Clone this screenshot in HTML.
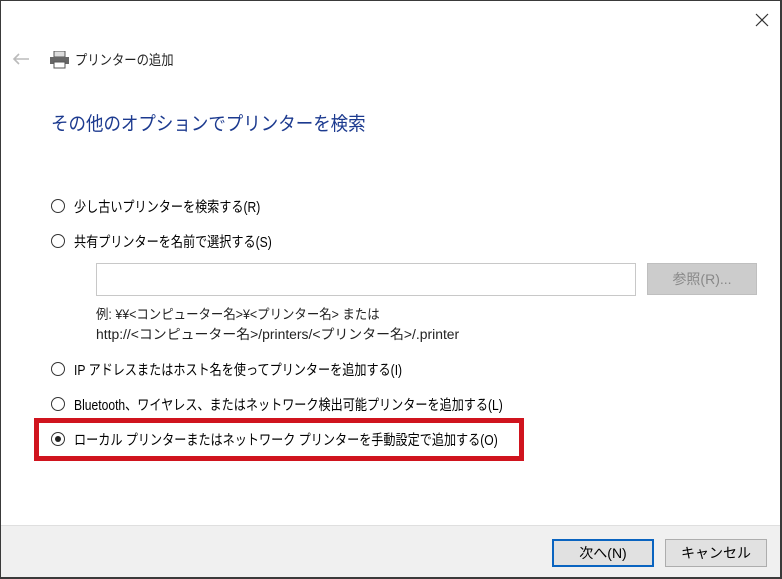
<!DOCTYPE html>
<html><head><meta charset="utf-8"><style>
*{margin:0;padding:0;box-sizing:border-box}
body{width:782px;height:579px;background:#3a3a3a;position:relative;overflow:hidden;font-family:"Liberation Sans","Noto Sans CJK JP",sans-serif;color:#000}
.win{position:absolute;left:1px;top:1px;width:779px;height:576px;background:#fff}
.abs{position:absolute;white-space:nowrap;transform-origin:left center}
.r{position:absolute;width:14px;height:14px;border:1.5px solid #333;border-radius:50%;background:#fff}
.t{font-size:14.5px;transform:scaleX(0.835)}
.foot{position:absolute;left:0;top:524px;width:779px;height:52px;background:#f0f0f0;border-top:1px solid #dfdfdf}
.btn{position:absolute;height:28px;background:#e1e1e1;border:1px solid #adadad;font-size:14px;text-align:center;line-height:26px}
</style></head><body><div class="win">
<svg class="abs" style="left:754px;top:12px" width="14" height="14" viewBox="0 0 14 14"><path d="M1 1L13 13M13 1L1 13" stroke="#333" stroke-width="1.2"/></svg>
<svg class="abs" style="left:11px;top:52px" width="18" height="12" viewBox="0 0 18 12"><path d="M17 6H2M7 1L2 6L7 11" stroke="#bbb" stroke-width="1.6" fill="none"/></svg>
<svg class="abs" style="left:48px;top:50px" width="22" height="18" viewBox="0 0 22 18"><rect x="5" y="0" width="11" height="6" fill="#ddd" stroke="#555"/><rect x="1" y="6" width="19" height="7" fill="#666"/><rect x="5" y="11" width="11" height="6" fill="#fff" stroke="#555"/></svg>
<div class="abs" style="left:74px;top:49px;font-size:14px;color:#222;transform:scaleX(0.88)">プリンターの追加</div>
<div class="abs" style="left:50px;top:108px;font-size:19px;color:#1c3a8f;transform:scaleX(0.92)">その他のオプションでプリンターを検索</div>
<div class="r" style="left:50px;top:198px"></div><div class="abs t" style="left:73px;top:195px">少し古いプリンターを検索する(R)</div>
<div class="r" style="left:50px;top:233px"></div><div class="abs t" style="left:73px;top:230px">共有プリンターを名前で選択する(S)</div>
<div class="abs" style="left:95px;top:262px;width:540px;height:33px;border:1px solid #c8c8c8"></div>
<div class="abs" style="left:646px;top:262px;width:110px;height:32px;background:#cccccc;border:1px solid #bfbfbf;color:#888;font-size:14px;text-align:center;line-height:30px">参照(R)...</div>
<div class="abs" style="left:95px;top:302px;font-size:13.5px;color:#222;transform:scaleX(0.92)">例: ¥¥&lt;コンピューター名&gt;¥&lt;プリンター名&gt; または</div>
<div class="abs" style="left:95px;top:322px;font-size:13.5px;color:#222;transform:scaleX(1.03)">http://&lt;コンピューター名&gt;/printers/&lt;プリンター名&gt;/.printer</div>
<div class="r" style="left:50px;top:361px"></div><div class="abs t" style="left:73px;top:358px">IP アドレスまたはホスト名を使ってプリンターを追加する(I)</div>
<div class="r" style="left:50px;top:396px"></div><div class="abs t" style="left:73px;top:393px">Bluetooth、ワイヤレス、またはネットワーク検出可能プリンターを追加する(L)</div>
<div class="abs" style="left:33px;top:417px;width:490px;height:43px;border:5px solid #d0141e"></div>
<div class="r" style="left:50px;top:431px"><div style="position:absolute;left:2.5px;top:2.5px;width:6px;height:6px;border-radius:50%;background:#222"></div></div>
<div class="abs t" style="left:73px;top:428px">ローカル プリンターまたはネットワーク プリンターを手動設定で追加する(O)</div>
<div class="foot">
<div class="btn" style="left:551px;top:13px;width:102px;border:2px solid #0a64c0;line-height:24px">次へ(N)</div>
<div class="btn" style="left:664px;top:13px;width:102px">キャンセル</div>
</div>
</div></body></html>
